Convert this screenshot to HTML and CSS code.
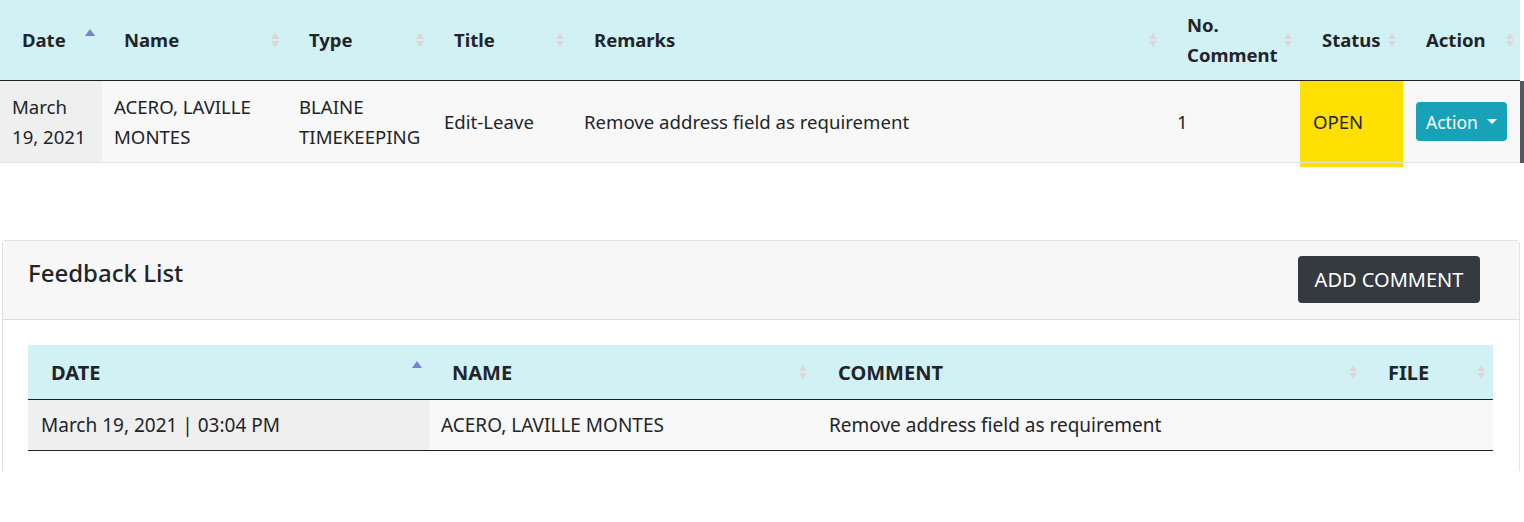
FILE: index.html
```html
<!DOCTYPE html>
<html>
<head>
<meta charset="utf-8">
<link rel="stylesheet" href="styles.css">
</head>
<body>
<div class="page">
  <table class="grid top">
    <colgroup>
      <col style="width:102px"><col style="width:185px"><col style="width:145px"><col style="width:140px">
      <col style="width:593px"><col style="width:135px"><col style="width:103px"><col style="width:117px">
    </colgroup>
    <thead>
      <tr>
        <th><div class="th-in"><span>Date</span><svg class="sort up" viewBox="0 0 12 20" width="12" height="20"><path d="M1 9 L6 2 L11 9 Z" fill="#7b7fd9"/></svg></div></th>
        <th><div class="th-in"><span>Name</span><svg class="sort" viewBox="0 0 12 20" width="12" height="20"><path d="M2 9 L6 3 L10 9 Z M2 11 L6 17 L10 11 Z" fill="#ded5da"/></svg></div></th>
        <th><div class="th-in"><span>Type</span><svg class="sort" viewBox="0 0 12 20" width="12" height="20"><path d="M2 9 L6 3 L10 9 Z M2 11 L6 17 L10 11 Z" fill="#ded5da"/></svg></div></th>
        <th><div class="th-in"><span>Title</span><svg class="sort" viewBox="0 0 12 20" width="12" height="20"><path d="M2 9 L6 3 L10 9 Z M2 11 L6 17 L10 11 Z" fill="#ded5da"/></svg></div></th>
        <th><div class="th-in"><span>Remarks</span><svg class="sort" viewBox="0 0 12 20" width="12" height="20"><path d="M2 9 L6 3 L10 9 Z M2 11 L6 17 L10 11 Z" fill="#ded5da"/></svg></div></th>
        <th><div class="th-in"><span>No.<br>Comment</span><svg class="sort" viewBox="0 0 12 20" width="12" height="20"><path d="M2 9 L6 3 L10 9 Z M2 11 L6 17 L10 11 Z" fill="#ded5da"/></svg></div></th>
        <th class="th-status"><div class="th-in"><span>Status</span><svg class="sort" viewBox="0 0 12 20" width="12" height="20"><path d="M2 9 L6 3 L10 9 Z M2 11 L6 17 L10 11 Z" fill="#ded5da"/></svg></div></th>
        <th class="th-action"><div class="th-in"><span>Action</span><svg class="sort" viewBox="0 0 12 20" width="12" height="20"><path d="M2 9 L6 3 L10 9 Z M2 11 L6 17 L10 11 Z" fill="#ded5da"/></svg></div></th>
      </tr>
    </thead>
    <tbody>
      <tr>
        <td class="sorted">March<br>19, 2021</td>
        <td>ACERO, LAVILLE<br>MONTES</td>
        <td>BLAINE<br>TIMEKEEPING</td>
        <td>Edit-Leave</td>
        <td>Remove address field as requirement</td>
        <td class="num">1</td>
        <td class="status">OPEN</td>
        <td class="act"><button class="btn-action">Action <span class="caret"></span></button></td>
      </tr>
    </tbody>
  </table>

  <div class="card">
    <div class="card-head">
      <h2 class="card-title">Feedback List</h2>
      <button class="btn-dark">ADD COMMENT</button>
    </div>
    <div class="card-body">
      <table class="grid bottom">
        <colgroup>
          <col style="width:401px"><col style="width:386px"><col style="width:550px"><col style="width:128px">
        </colgroup>
        <thead>
          <tr>
            <th><div class="th-in"><span>DATE</span><svg class="sort up" viewBox="0 0 12 20" width="12" height="20"><path d="M1 9 L6 2 L11 9 Z" fill="#7b7fd9"/></svg></div></th>
            <th><div class="th-in"><span>NAME</span><svg class="sort" viewBox="0 0 12 20" width="12" height="20"><path d="M2 9 L6 3 L10 9 Z M2 11 L6 17 L10 11 Z" fill="#ded5da"/></svg></div></th>
            <th><div class="th-in"><span>COMMENT</span><svg class="sort" viewBox="0 0 12 20" width="12" height="20"><path d="M2 9 L6 3 L10 9 Z M2 11 L6 17 L10 11 Z" fill="#ded5da"/></svg></div></th>
            <th><div class="th-in"><span>FILE</span><svg class="sort" viewBox="0 0 12 20" width="12" height="20"><path d="M2 9 L6 3 L10 9 Z M2 11 L6 17 L10 11 Z" fill="#ded5da"/></svg></div></th>
          </tr>
        </thead>
        <tbody>
          <tr>
            <td class="sorted">March 19, 2021 | 03:04 PM</td>
            <td>ACERO, LAVILLE MONTES</td>
            <td class="c-comment">Remove address field as requirement</td>
            <td></td>
          </tr>
        </tbody>
      </table>
    </div>
  </div>
</div>
</body>
</html>
```

FILE: styles.css
```css
* { box-sizing: border-box; }
html, body { margin: 0; padding: 0; background: #fff; }
body {
  font-family: "Noto Sans", "Open Sans", sans-serif;
  color: #212529;
  width: 1524px;
  height: 522px;
  overflow: hidden;
}
.page { width: 1524px; }

.grid {
  border-collapse: separate;
  border-spacing: 0;
  table-layout: fixed;
}
.grid th {
  background: #d2f1f4;
  text-align: left;
  font-weight: 700;
  vertical-align: middle;
}
.th-in {
  display: flex;
  align-items: center;
  justify-content: space-between;
}
.sort { flex: none; }
.sort.up { margin-top: -7px; }

/* top table */
.top { width: 1520px; }
.top th {
  height: 81px;
  padding: 0 6px 0 22px;
  font-size: 18.5px;
  line-height: 30px;
  border-bottom: 1px solid #222;
}
.top th.th-status { padding-left: 22px; padding-right: 5px; }
.top th.th-action { padding-left: 23px; padding-right: 4px; }
.top td {
  background: #f8f8f8;
  font-size: 18.6px;
  line-height: 30px;
  padding: 10px 12px;
  height: 82px;
  border-bottom: 1px solid #e2e2e2;
  vertical-align: middle;
}
.top td.sorted { background: #efefef; }
.top td.num { padding-left: 12px; }
.top td.status {
  background: #ffe000;
  padding-left: 13px;
  box-shadow: 0 4px 0 #ffe000;
}
.top td.act { box-shadow: 4px 0 0 #55575c; padding-left: 13px; }

.btn-action {
  font-family: inherit;
  font-size: 17.5px;
  color: #fff;
  background: #17a2b8;
  border: 0;
  border-radius: 4px;
  height: 39px;
  width: 91px;
  padding: 0 0 0 10px;
  display: flex;
  align-items: center;
  gap: 9px;
}
.caret {
  width: 0; height: 0;
  border-left: 5px solid transparent;
  border-right: 5px solid transparent;
  border-top: 5px solid #fff;
}

/* card */
.card {
  margin: 77px 0 0 2px;
  width: 1518px;
  height: 231px;
  border: 1px solid #e3e3e3;
  border-bottom: 0;
  border-radius: 4px 4px 0 0;
}
.card-head {
  height: 79px;
  background: #f7f7f7;
  border-bottom: 1px solid #dedede;
  display: flex;
  justify-content: space-between;
  align-items: flex-start;
  padding: 0 39px 0 25px;
}
.card-title {
  margin: 16px 0 0;
  font-size: 24px;
  font-weight: 500;
  line-height: 32px;
}
.btn-dark {
  margin-top: 15px;
  font-family: inherit;
  font-size: 20px;
  color: #fff;
  background: #343a40;
  border: 0;
  border-radius: 4px;
  height: 47px;
  width: 182px;
  padding: 0;
}
.card-body { padding: 25px 0 0 25px; }

.bottom { width: 1465px; }
.bottom th {
  height: 55px;
  padding: 0 6px 0 23px;
  font-size: 20px;
  border-bottom: 1px solid #222;
}
.bottom td {
  background: #f8f8f8;
  font-size: 19px;
  height: 51px;
  padding: 0 12px;
  border-bottom: 1.5px solid #222;
  vertical-align: middle;
}
.bottom td.sorted { background: #efefef; padding-left: 13px; }
.bottom td.c-comment { padding-left: 14px; }
```
